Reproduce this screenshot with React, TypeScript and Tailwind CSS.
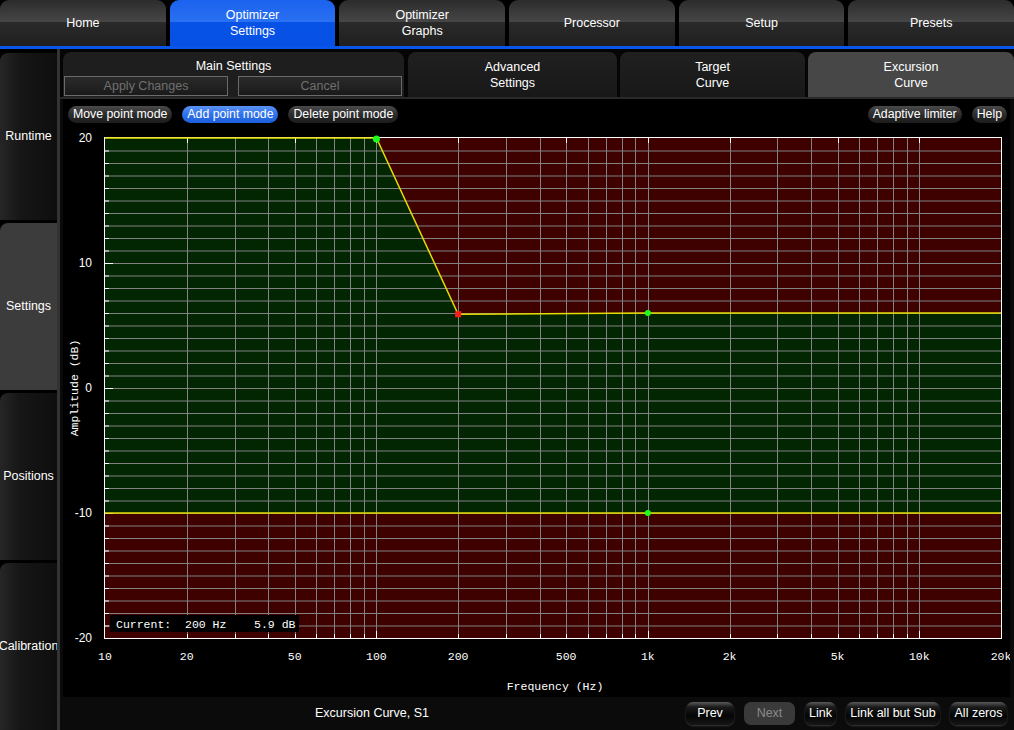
import React from 'react';

const TOP_TABS = [
  { label: ['Home'] },
  { label: ['Optimizer', 'Settings'], active: true },
  { label: ['Optimizer', 'Graphs'] },
  { label: ['Processor'] },
  { label: ['Setup'] },
  { label: ['Presets'] },
];

const SIDE = [
  { label: 'Runtime' },
  { label: 'Settings', active: true },
  { label: 'Positions' },
  { label: 'Calibration' },
];

// plot geometry in page pixels
const PL = 105;
const PR = 1001;
const PT = 138;
const PB = 638;
const fx = (f: number) => PL + ((PR - PL) * Math.log10(f / 10)) / Math.log10(2000);
const fy = (db: number) => 388 - 12.5 * db;

const upper: [number, number][] = [
  [10, 20],
  [100, 20],
  [200, 5.9],
  [1000, 6.0],
  [20000, 6.0],
];
const lower: [number, number][] = [
  [10, -10],
  [20000, -10],
];

const freqLines: number[] = [];
[10, 100, 1000, 10000].forEach((d) => {
  for (let m = 1; m <= 9; m++) {
    const f = d * m;
    if (f > 10 && f < 20000) freqLines.push(f);
  }
});

const xLabels: [number, string][] = [
  [10, '10'],
  [20, '20'],
  [50, '50'],
  [100, '100'],
  [200, '200'],
  [500, '500'],
  [1000, '1k'],
  [2000, '2k'],
  [5000, '5k'],
  [10000, '10k'],
  [20000, '20k'],
];

function Pill({ children, active }: { children: React.ReactNode; active?: boolean }) {
  return (
    <div
      className={`flex h-[17px] items-center rounded-full px-[5px] text-[12.3px] leading-none text-white ${
        active
          ? 'bg-[linear-gradient(to_bottom,#5b93f5_0%,#2f72ea_50%,#1d5fdc_100%)]'
          : 'bg-[linear-gradient(to_bottom,#4a4a4a_0%,#2c2c2c_50%,#1c1c1c_100%)] shadow-[0_1px_1px_#000]'
      }`}
    >
      {children}
    </div>
  );
}

function BarButton({ children, disabled, w }: { children: React.ReactNode; disabled?: boolean; w: string }) {
  return (
    <div
      className={`flex h-[23px] items-center justify-center rounded-[7px] text-[12.5px] leading-none ${w} ${
        disabled
          ? 'bg-[#3a3a3a] text-[#8a8a8a]'
          : 'bg-[linear-gradient(to_bottom,#5a5a5a_0%,#1a1a1a_22%,#050505_60%,#161616_100%)] text-white shadow-[0_1px_2px_#3a3a3a]'
      }`}
    >
      {children}
    </div>
  );
}

function Chart() {
  const up = upper.map(([f, d]) => `${fx(f)},${fy(d)}`).join(' ');
  const lo = [...lower].reverse().map(([f, d]) => `${fx(f)},${fy(d)}`).join(' ');
  const hLines: number[] = [];
  for (let d = -19; d <= 19; d++) hLines.push(d);
  return (
    <svg
      width={947}
      height={572}
      viewBox="63 125 947 572"
      className="block"
      style={{ fontFamily: '"Liberation Mono", monospace' }}
    >
      <rect x={PL} y={PT} width={PR - PL} height={PB - PT} fill="#3f0000" />
      <polygon points={`${up} ${lo}`} fill="#012601" />
      {hLines.map((d) => (
        <line key={`h${d}`} x1={PL} x2={PR} y1={fy(d) + 0.5} y2={fy(d) + 0.5} stroke="#828282" strokeWidth={1} />
      ))}
      {freqLines.map((f) => (
        <line
          key={`v${f}`}
          x1={Math.round(fx(f)) + 0.5}
          x2={Math.round(fx(f)) + 0.5}
          y1={PT}
          y2={PB}
          stroke="#828282"
          strokeWidth={1}
        />
      ))}
      {/* ticks */}
      {hLines.map((d) => (
        <line
          key={`lt${d}`}
          x1={PL}
          x2={PL + (d % 10 === 0 ? 8 : 4)}
          y1={fy(d) + 0.5}
          y2={fy(d) + 0.5}
          stroke="#ffffff"
          strokeWidth={1}
        />
      ))}
      {freqLines.map((f) => (
        <line
          key={`bt${f}`}
          x1={Math.round(fx(f)) + 0.5}
          x2={Math.round(fx(f)) + 0.5}
          y1={PB - ([100, 1000, 10000].includes(f) ? 7 : 4)}
          y2={PB}
          stroke="#ffffff"
          strokeWidth={1}
        />
      ))}
      {xLabels.slice(1, -1).map(([f]) => (
        <line
          key={`tt${f}`}
          x1={Math.round(fx(f)) + 0.5}
          x2={Math.round(fx(f)) + 0.5}
          y1={PT}
          y2={PT + 5}
          stroke="#ffffff"
          strokeWidth={1}
        />
      ))}
      <rect x={PL - 0.5} y={PT - 0.5} width={PR - PL + 1} height={PB - PT + 1} fill="none" stroke="#ffffff" strokeWidth={1} />
      {/* curves */}
      <polyline points={up} fill="none" stroke="#e6dc00" strokeWidth={1.5} />
      <polyline points={lower.map(([f, d]) => `${fx(f)},${fy(d)}`).join(' ')} fill="none" stroke="#e6dc00" strokeWidth={1.5} />
      <circle cx={fx(100)} cy={fy(20) + 1} r={3.5} fill="#19ff19" />
      <circle cx={fx(1000)} cy={fy(6.0)} r={3} fill="#19ff19" />
      <circle cx={fx(1000)} cy={fy(-10)} r={3} fill="#19ff19" />
      <rect x={fx(200) - 3} y={fy(5.9) - 3} width={6} height={6} fill="#ff1a1a" />
      {/* current readout */}
      <rect x={110} y={615} width={189} height={17} fill="#000000" />
      <text x={116} y={628} fontSize={11.5} fill="#ffffff" className="whitespace-pre">
        {'Current:  200 Hz    5.9 dB'}
      </text>
      {/* y labels */}
      {[20, 10, 0, -10, -20].map((d) => (
        <text
          key={`yl${d}`}
          x={92}
          y={fy(d) + 4}
          fontSize={12}
          fill="#ffffff"
          textAnchor="end"
          style={{ fontFamily: '"Liberation Sans", Arial, sans-serif' }}
        >
          {d}
        </text>
      ))}
      {xLabels.map(([f, s]) => (
        <text key={`xl${f}`} x={fx(f)} y={660} fontSize={11.5} fill="#ffffff" textAnchor="middle">
          {s}
        </text>
      ))}
      <text x={555} y={690} fontSize={11.5} fill="#ffffff" textAnchor="middle">
        Frequency (Hz)
      </text>
      <text
        x={0}
        y={0}
        fontSize={11.5}
        fill="#ffffff"
        textAnchor="middle"
        transform={`translate(78 388) rotate(-90)`}
      >
        Amplitude (dB)
      </text>
    </svg>
  );
}

export default function App() {
  return (
    <div
      className="flex h-[730px] w-[1014px] flex-col overflow-hidden bg-black text-[12px] text-white"
      style={{ fontFamily: '"Liberation Sans", Arial, sans-serif' }}
    >
      {/* Top navigation */}
      <div className="flex h-[46px] gap-[4px] bg-black">
        {TOP_TABS.map((t) => (
          <div
            key={t.label.join(' ')}
            className={`flex flex-1 flex-col items-center justify-center rounded-t-[9px] text-[12.5px] leading-[16px] ${
              t.active
                ? 'bg-[linear-gradient(to_bottom,#1b62ee_0%,#2a70f2_47%,#0752e6_48%,#0650e4_100%)]'
                : 'bg-[linear-gradient(to_bottom,#2c2c2c_0%,#464646_47%,#2a2a2a_48%,#1f1f1f_100%)]'
            }`}
          >
            {t.label.map((l) => (
              <span key={l}>{l}</span>
            ))}
          </div>
        ))}
      </div>
      <div className="h-[3px] bg-[#0a56e8]" />

      <div className="flex flex-1">
        {/* Sidebar */}
        <div className="flex w-[57px] flex-col gap-[3px] bg-black pt-[4px]">
          {SIDE.map((s) => (
            <div
              key={s.label}
              className={`flex h-[167px] items-center justify-center rounded-tl-[8px] text-[12.5px] ${
                s.active
                  ? 'bg-[#3c3c3c]'
                  : 'bg-[linear-gradient(to_right,#262626_0%,#161616_35%,#0e0e0e_100%)]'
              }`}
            >
              <span className="whitespace-nowrap">{s.label}</span>
            </div>
          ))}
        </div>
        <div className="w-[3px] bg-[#333333]" />

        {/* Content */}
        <div className="flex flex-1 flex-col bg-[#0a0a0a]">
          <div className="flex h-[48px] bg-[#050505] pl-[3px] pt-[3px] text-[12.5px]">
            <div className="flex w-[341px] flex-col items-center rounded-t-[8px] bg-[#1e1e1e] pt-[7px]">
              <span className="leading-[14px]">Main Settings</span>
              <div className="mt-[3px] flex w-full gap-[10px] pl-[1px]">
                <div className="flex h-[20px] w-[164px] items-center justify-center border border-[#6a6a6a] bg-[linear-gradient(to_bottom,#2a2a2a,#1a1a1a)] text-[#707070]">
                  Apply Changes
                </div>
                <div className="flex h-[20px] w-[164px] items-center justify-center border border-[#6a6a6a] bg-[linear-gradient(to_bottom,#2a2a2a,#1a1a1a)] text-[#707070]">
                  Cancel
                </div>
              </div>
            </div>
            <div className="ml-[4px] flex w-[209px] flex-col items-center justify-center rounded-t-[8px] bg-[linear-gradient(to_bottom,#202020,#181818)] leading-[16px]">
              <span>Advanced</span>
              <span>Settings</span>
            </div>
            <div className="ml-[3px] flex w-[185px] flex-col items-center justify-center rounded-t-[8px] bg-[linear-gradient(to_bottom,#202020,#181818)] leading-[16px]">
              <span>Target</span>
              <span>Curve</span>
            </div>
            <div className="ml-[3px] flex flex-1 flex-col items-center justify-center rounded-t-[8px] bg-[#474747] leading-[16px]">
              <span>Excursion</span>
              <span>Curve</span>
            </div>
          </div>
          <div className="h-[2px] bg-[#2a2a2a]" />

          {/* Chart panel */}
          <div className="ml-[3px] mr-[4px] flex h-[598px] flex-col bg-black">
            <div className="flex h-[26px] items-start justify-between pl-[5px] pr-[3px] pt-[7px]">
              <div className="flex gap-[10px]">
                <Pill>Move point mode</Pill>
                <Pill active>Add point mode</Pill>
                <Pill>Delete point mode</Pill>
              </div>
              <div className="flex gap-[10px]">
                <Pill>Adaptive limiter</Pill>
                <Pill>Help</Pill>
              </div>
            </div>
            <Chart />
          </div>

          {/* Status bar */}
          <div className="flex h-[33px] items-center bg-[#0b0b0b] pr-[7px] text-[12.5px]">
            <div className="w-[624px] text-center">Excursion Curve, S1</div>
            <div className="ml-auto flex gap-[10px]">
              <BarButton w="w-[48px]">Prev</BarButton>
              <BarButton w="w-[51px]" disabled>
                Next
              </BarButton>
              <BarButton w="w-[31px]">Link</BarButton>
              <BarButton w="w-[94px]">Link all but Sub</BarButton>
              <BarButton w="w-[57px]">All zeros</BarButton>
            </div>
          </div>
        </div>
      </div>
    </div>
  );
}
